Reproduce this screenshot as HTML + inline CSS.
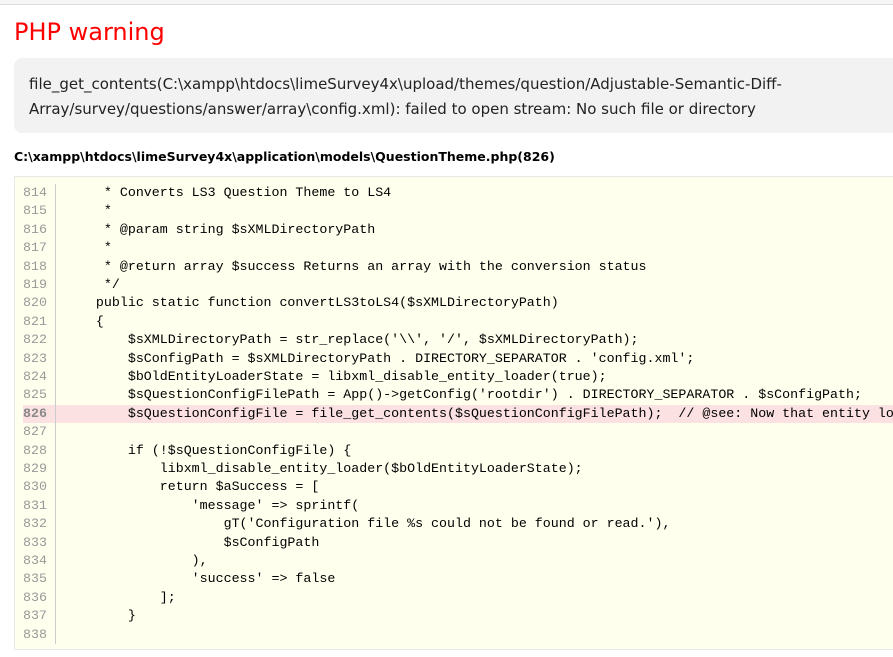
<!DOCTYPE html>
<html><head><style>
body{margin:0;background:#fff;font-family:"Liberation Sans",sans-serif;width:893px;height:657px;overflow:hidden;position:relative}
.top{position:absolute;left:0;top:0;width:893px;height:4px;border-bottom:1px solid #ddd;background:#f5f5f5}
h1{position:absolute;left:14px;top:18px;margin:0;font-weight:normal;color:#f00;font-family:"DejaVu Sans",sans-serif;font-size:24px}
.msg{position:absolute;left:14px;top:58px;width:900px;height:75px;background:#f2f2f2;border-radius:8px;box-sizing:border-box;padding:14px 15px;font-family:"DejaVu Sans",sans-serif;font-size:15px;line-height:25px;color:#222}
.file{position:absolute;left:14px;top:149px;font-family:"DejaVu Sans",sans-serif;font-size:12.5px;font-weight:bold;color:#000}
.code{position:absolute;left:14px;top:176px;width:900px;height:474px;background:#ffffee;border:1px solid #e8e8e8;box-sizing:border-box}
.ln{position:absolute;left:0;width:900px;height:18.4px;font-family:"Liberation Mono",monospace;font-size:13.3px;line-height:18.4px;white-space:pre;color:#000}
.ln .n{position:absolute;left:8px;width:32px;color:#999;border-right:1px solid #ccc;height:18.4px}
.ln .c{position:absolute;left:49px}
.hl{background:#fbe1e1}
.hl .n{font-weight:bold;color:#888}
</style></head><body>
<div class="top"></div>
<h1>PHP warning</h1>
<div class="msg">file_get_contents(C:\xampp\htdocs\limeSurvey4x\upload/themes/question/Adjustable-Semantic-Diff-<br>Array/survey/questions/answer/array\config.xml): failed to open stream: No such file or directory</div>
<div class="file">C:\xampp\htdocs\limeSurvey4x\application\models\QuestionTheme.php(826)</div>
<div class="code">
<div class="ln" style="top:7px"><span class="n">814</span><span class="c">     * Converts LS3 Question Theme to LS4</span></div>
<div class="ln" style="top:25.4px"><span class="n">815</span><span class="c">     *</span></div>
<div class="ln" style="top:43.8px"><span class="n">816</span><span class="c">     * @param string $sXMLDirectoryPath</span></div>
<div class="ln" style="top:62.2px"><span class="n">817</span><span class="c">     *</span></div>
<div class="ln" style="top:80.6px"><span class="n">818</span><span class="c">     * @return array $success Returns an array with the conversion status</span></div>
<div class="ln" style="top:99px"><span class="n">819</span><span class="c">     */</span></div>
<div class="ln" style="top:117.4px"><span class="n">820</span><span class="c">    public static function convertLS3toLS4($sXMLDirectoryPath)</span></div>
<div class="ln" style="top:135.8px"><span class="n">821</span><span class="c">    {</span></div>
<div class="ln" style="top:154.2px"><span class="n">822</span><span class="c">        $sXMLDirectoryPath = str_replace('\\', '/', $sXMLDirectoryPath);</span></div>
<div class="ln" style="top:172.6px"><span class="n">823</span><span class="c">        $sConfigPath = $sXMLDirectoryPath . DIRECTORY_SEPARATOR . 'config.xml';</span></div>
<div class="ln" style="top:191px"><span class="n">824</span><span class="c">        $bOldEntityLoaderState = libxml_disable_entity_loader(true);</span></div>
<div class="ln" style="top:209.4px"><span class="n">825</span><span class="c">        $sQuestionConfigFilePath = App()->getConfig('rootdir') . DIRECTORY_SEPARATOR . $sConfigPath;</span></div>
<div class="ln hl" style="top:227.8px;left:8px"><span class="n" style="left:0">826</span><span class="c" style="left:41px">        $sQuestionConfigFile = file_get_contents($sQuestionConfigFilePath);  // @see: Now that entity loader</span></div>
<div class="ln" style="top:246.2px"><span class="n">827</span><span class="c"></span></div>
<div class="ln" style="top:264.6px"><span class="n">828</span><span class="c">        if (!$sQuestionConfigFile) {</span></div>
<div class="ln" style="top:283px"><span class="n">829</span><span class="c">            libxml_disable_entity_loader($bOldEntityLoaderState);</span></div>
<div class="ln" style="top:301.4px"><span class="n">830</span><span class="c">            return $aSuccess = [</span></div>
<div class="ln" style="top:319.8px"><span class="n">831</span><span class="c">                'message' => sprintf(</span></div>
<div class="ln" style="top:338.2px"><span class="n">832</span><span class="c">                    gT('Configuration file %s could not be found or read.'),</span></div>
<div class="ln" style="top:356.6px"><span class="n">833</span><span class="c">                    $sConfigPath</span></div>
<div class="ln" style="top:375px"><span class="n">834</span><span class="c">                ),</span></div>
<div class="ln" style="top:393.4px"><span class="n">835</span><span class="c">                'success' => false</span></div>
<div class="ln" style="top:411.8px"><span class="n">836</span><span class="c">            ];</span></div>
<div class="ln" style="top:430.2px"><span class="n">837</span><span class="c">        }</span></div>
<div class="ln" style="top:448.6px"><span class="n">838</span><span class="c"></span></div>
</div>
</body></html>
